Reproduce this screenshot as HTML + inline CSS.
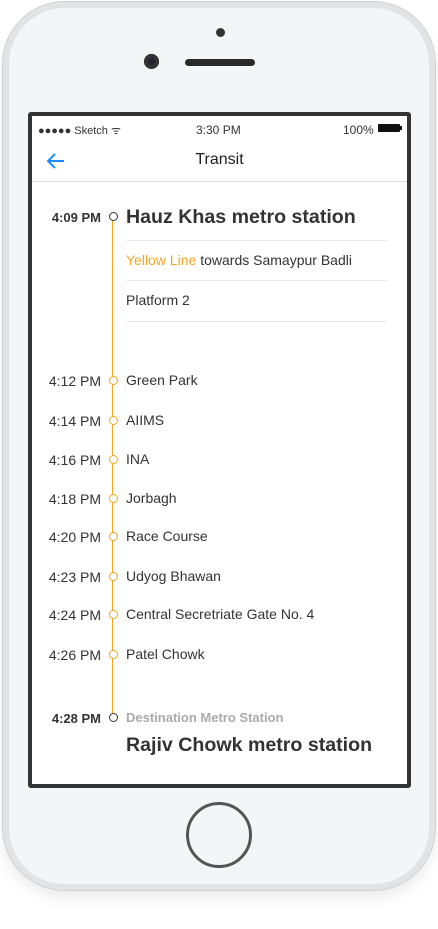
<!DOCTYPE html>
<html><head><style>
body{margin:0;width:438px;height:929px;background:#fff;position:relative;overflow:hidden;font-family:"Liberation Sans",sans-serif;color:#333}
.phone{position:absolute;left:3px;top:2px;width:432px;height:888px;border-radius:62px;background:#f4f5f7;box-shadow:0 0 0 1px #cfcfcf,inset 0 0 0 6px #e2e3e5,0 8px 14px rgba(0,0,0,.08)}
.screen{position:absolute;left:28px;top:112px;width:375px;height:668px;border:4px solid #333;border-radius:3px;background:#fff;overflow:hidden}
.a{position:absolute;white-space:nowrap}
.t{position:absolute;right:306px;font-size:14px;text-align:right}
.s{position:absolute;left:94px;font-size:14px}
.c{position:absolute;left:77px;width:7px;height:7px;border-radius:50%;border:1px solid #f5a623;background:#fff}
.hr{position:absolute;left:95px;width:260px;height:1px;background:#e8e8e8}
</style></head><body>
<div class="phone">
<div class="a" style="left:213px;top:26px;width:9px;height:9px;border-radius:50%;background:#333"></div>
<div class="a" style="left:141px;top:52px;width:15px;height:15px;border-radius:50%;background:#223;box-shadow:inset 0 0 0 4px #333"></div>
<div class="a" style="left:182px;top:57px;width:70px;height:7px;border-radius:4px;background:#2a2a2a"></div>
<div class="a" style="left:183px;top:800px;width:66px;height:66px;border-radius:50%;border:3px solid #555;box-sizing:border-box;background:#f4f5f7"></div>
</div>
<div class="screen">
<div class="a" style="left:6px;top:7px;font-size:11px">●●●●● Sketch ᯤ</div>
<div class="a" style="left:164px;top:7px;font-size:12px">3:30 PM</div>
<div class="a" style="left:311px;top:7px;font-size:12px">100%</div>
<div class="a" style="left:346px;top:8px;width:22px;height:8px;background:#111;border-radius:1px"></div>
<div class="a" style="left:368px;top:10px;width:2px;height:4px;background:#111"></div>
<svg class="a" style="left:15px;top:37px" width="18" height="16" viewBox="0 0 18 16"><path d="M17 8H2M8 1L1 8l7 7" fill="none" stroke="#1a8cff" stroke-width="2"/></svg>
<div class="a" style="left:0;width:375px;top:35px;text-align:center;font-size:16px;color:#222">Transit</div>
<div class="a" style="left:0;top:65px;width:375px;height:1px;background:#ddd"></div>
<div class="a" style="left:80px;top:104px;width:1px;height:498px;background:#f5a623"></div>
<div class="t" style="top:94px;font-weight:bold;font-size:13px">4:09 PM</div>
<div class="c" style="top:96px;border-color:#333"></div>
<div class="s" style="top:90px;font-size:19.6px;font-weight:bold">Hauz Khas metro station</div>
<div class="hr" style="top:124px"></div>
<div class="s" style="top:136px"><span style="color:#f5a623">Yellow Line</span> towards Samaypur Badli</div>
<div class="hr" style="top:164px"></div>
<div class="s" style="top:176px">Platform 2</div>
<div class="hr" style="top:205px"></div>
<div class="t" style="top:257px">4:12 PM</div><div class="c" style="top:260px"></div><div class="s" style="top:256px">Green Park</div>
<div class="t" style="top:297px">4:14 PM</div><div class="c" style="top:300px"></div><div class="s" style="top:296px">AIIMS</div>
<div class="t" style="top:336px">4:16 PM</div><div class="c" style="top:339px"></div><div class="s" style="top:335px">INA</div>
<div class="t" style="top:375px">4:18 PM</div><div class="c" style="top:378px"></div><div class="s" style="top:374px">Jorbagh</div>
<div class="t" style="top:413px">4:20 PM</div><div class="c" style="top:416px"></div><div class="s" style="top:412px">Race Course</div>
<div class="t" style="top:453px">4:23 PM</div><div class="c" style="top:456px"></div><div class="s" style="top:452px">Udyog Bhawan</div>
<div class="t" style="top:491px">4:24 PM</div><div class="c" style="top:494px"></div><div class="s" style="top:490px">Central Secretriate Gate No. 4</div>
<div class="t" style="top:531px">4:26 PM</div><div class="c" style="top:534px"></div><div class="s" style="top:530px">Patel Chowk</div>
<div class="t" style="top:595px;font-weight:bold;font-size:13px">4:28 PM</div>
<div class="c" style="top:597px;border-color:#333"></div>
<div class="s" style="top:594px;font-size:13px;font-weight:bold;color:#aaa">Destination Metro Station</div>
<div class="s" style="top:618px;font-size:19.6px;font-weight:bold">Rajiv Chowk metro station</div>
</div>
</body></html>
